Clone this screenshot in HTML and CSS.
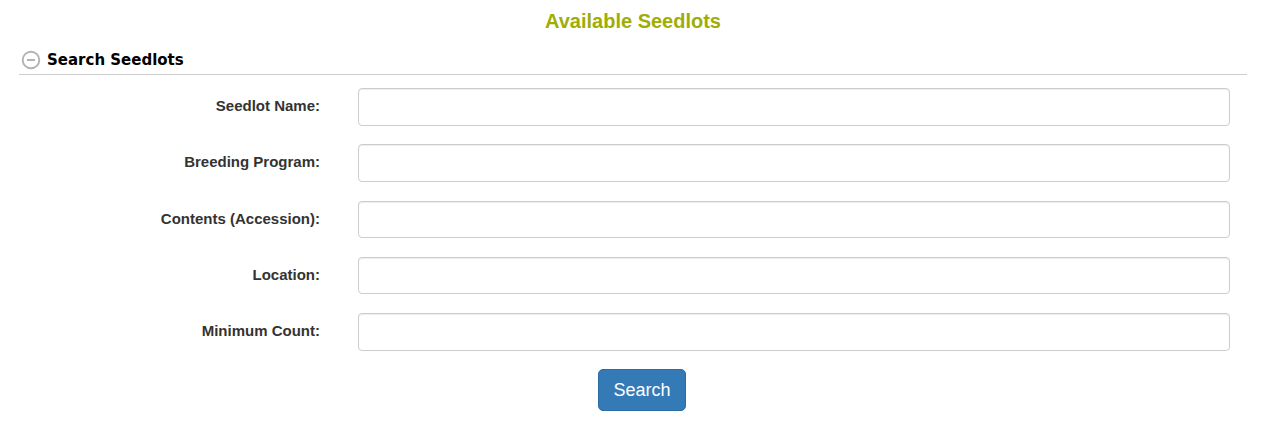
FILE: index.html
```html
<!DOCTYPE html>
<html lang="en">
<head>
<meta charset="utf-8">
<title>Available Seedlots</title>
<link rel="stylesheet" href="styles.css">
</head>
<body>
<main class="page">
  <h1 class="title">Available Seedlots</h1>
  <header class="section-head">
    <svg class="toggle" viewBox="0 0 20 20" width="20" height="20"><circle cx="10" cy="10" r="8.3" fill="none" stroke="#b3b3b3" stroke-width="1.9"/><path d="M6 10h8" stroke="#b3b3b3" stroke-width="2"/></svg>
    <h2 class="section-title">Search Seedlots</h2>
  </header>
  <form class="form">
    <div class="row"><label class="label" for="name"><span>Seedlot Name:</span></label><input class="field" id="name" type="text"></div>
    <div class="row"><label class="label" for="program"><span>Breeding Program:</span></label><input class="field" id="program" type="text"></div>
    <div class="row"><label class="label" for="contents"><span>Contents (Accession):</span></label><input class="field" id="contents" type="text"></div>
    <div class="row"><label class="label" for="location"><span>Location:</span></label><input class="field" id="location" type="text"></div>
    <div class="row"><label class="label" for="count"><span>Minimum Count:</span></label><input class="field" id="count" type="text"></div>
    <button class="search" type="button">Search</button>
  </form>
</main>
</body>
</html>
```
FILE: styles.css
```css
* { box-sizing: border-box; }
body { margin: 0; background: #fff; color: #333; font-family: "Liberation Sans", Arial, sans-serif; overflow: hidden; }
.page { height: 423px; padding: 9px 26px 0 19px; }
.title { margin: 0; font-size: 20px; line-height: 24px; color: #9fad04; text-align: center; }
.section-head { display: flex; align-items: center; height: 42px; padding: 12px 0 0 2px; gap: 6px; border-bottom: 1px solid #ccc; }
.section-title { margin: 0; font: bold 15px/20px "DejaVu Sans", Verdana, sans-serif; color: #000; }
.form { display: flex; flex-direction: column; gap: 18.75px; padding: 13px 17px 0 0; }
.row { display: grid; grid-template-columns: 301px 1fr; column-gap: 38px; height: 37.5px; }
.label { padding-top: 8px; text-align: right; font-size: 15px; font-weight: bold; line-height: 20px; }
.field { width: 100%; height: 37.5px; border: 1px solid #ccc; border-radius: 4px; background: #fff; box-shadow: inset 0 1px 1px rgba(0,0,0,.075); }
.search { align-self: flex-start; margin-left: 579px; width: 88px; height: 42px; padding: 0; border: 1px solid #2e6da4; border-radius: 5px; background: #337ab7; color: #fff; font: 18px/24px "Liberation Sans", Arial, sans-serif; }
```
